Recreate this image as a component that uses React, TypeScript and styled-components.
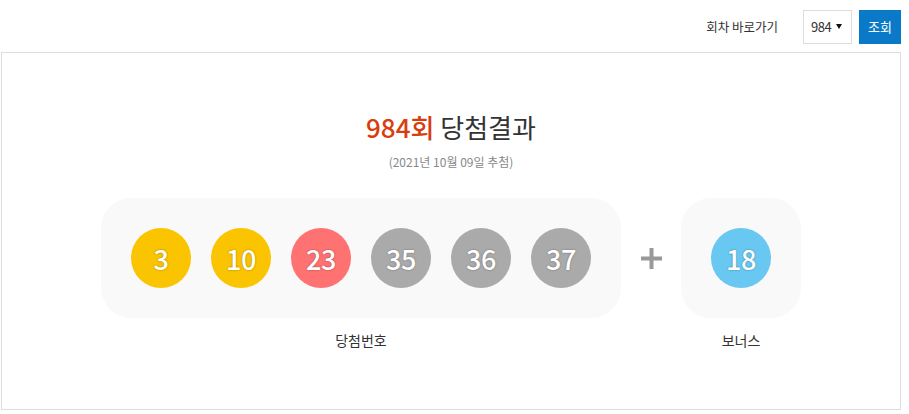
import styled, { createGlobalStyle } from "styled-components";

const GlobalStyle = createGlobalStyle`
  body {
    margin: 0;
    font-family: "Noto Sans CJK KR", "Noto Sans", sans-serif;
    color: #333;
    background: #fff;
  }
`;

type BallColor = "yellow" | "red" | "gray" | "blue";

const ballColors: Record<BallColor, string> = {
  yellow: "#fbc400",
  red: "#ff7272",
  gray: "#aaaaaa",
  blue: "#69c8f2",
};

const colorOf = (n: number): BallColor => {
  if (n <= 10) return "yellow";
  if (n <= 20) return "blue";
  if (n <= 30) return "red";
  return "gray";
};

const App: React.FC = () => {
  return (
    <>
      <GlobalStyle />
      <Wrap>
        <Header>
          <JumpLabel>회차 바로가기</JumpLabel>
          <Select>
            984
            <Caret />
          </Select>
          <SearchButton>조회</SearchButton>
        </Header>
        <Panel>
          <Title>
            <Round>984회</Round> 당첨결과
          </Title>
          <DrawDate>(2021년 10월 09일 추첨)</DrawDate>
          <Result>
            <Group>
              <NumberBox>
                {winning.map((n) => (
                  <Ball key={n} $color={colorOf(n)}>
                    {n}
                  </Ball>
                ))}
              </NumberBox>
              <Label>당첨번호</Label>
            </Group>
            <Plus>
              <svg width="21" height="21" viewBox="0 0 21 21">
                <path d="M10.5 0v21M0 10.5h21" stroke="#999" strokeWidth="4" />
              </svg>
            </Plus>
            <Group>
              <NumberBox>
                <Ball $color={colorOf(bonus)}>{bonus}</Ball>
              </NumberBox>
              <Label>보너스</Label>
            </Group>
          </Result>
        </Panel>
      </Wrap>
    </>
  );
};

const winning = [3, 10, 23, 35, 36, 37];
const bonus = 18;

const Wrap = styled.div`
  width: 900px;
  margin-left: 1px;
`;

const Header = styled.div`
  height: 52px;
  display: flex;
  align-items: center;
  justify-content: flex-end;
  padding-top: 1px;
  box-sizing: border-box;
`;

const JumpLabel = styled.span`
  font-size: 12.5px;
  color: #333;
  margin-right: 25px;
`;

const Select = styled.div`
  width: 49px;
  height: 34px;
  box-sizing: border-box;
  border: 1px solid #ddd;
  display: flex;
  align-items: center;
  padding-left: 7px;
  font-size: 13px;
  color: #333;
  letter-spacing: -0.5px;
`;

const Caret = styled.span`
  width: 0;
  height: 0;
  margin-left: 5px;
  border-left: 3.5px solid transparent;
  border-right: 3.5px solid transparent;
  border-top: 5px solid #111;
`;

const SearchButton = styled.button`
  width: 42px;
  height: 34px;
  margin-left: 7px;
  border: 0;
  padding: 0;
  background: #0a7ac8;
  color: #fff;
  font-family: inherit;
  font-size: 13px;
`;

const Panel = styled.div`
  height: 358px;
  box-sizing: border-box;
  border: 1px solid #ddd;
  padding-top: 59px;
  display: flex;
  flex-direction: column;
  align-items: center;
`;

const Title = styled.h2`
  margin: 0;
  font-size: 26px;
  line-height: 30px;
  font-weight: 400;
  color: #333;
`;

const Round = styled.strong`
  color: #d83d0e;
  font-weight: 500;
`;

const DrawDate = styled.p`
  margin: 11px 0 0;
  font-size: 12px;
  line-height: 18px;
  color: #888;
`;

const Result = styled.div`
  display: flex;
  margin-top: 27px;
`;

const Group = styled.div`
  display: flex;
  flex-direction: column;
  align-items: center;
`;

const NumberBox = styled.div`
  display: flex;
  gap: 20px;
  padding: 30px;
  background: #f9f9f9;
  border-radius: 30px;
`;

const Ball = styled.span<{ $color: BallColor }>`
  width: 60px;
  height: 60px;
  border-radius: 50%;
  background: ${(p) => ballColors[p.$color]};
  color: #fff;
  display: flex;
  align-items: center;
  justify-content: center;
  font-size: 27px;
  font-weight: 500;
  letter-spacing: -0.5px;
  text-shadow: 0 0 2px rgba(0, 0, 0, 0.4);
`;

const Plus = styled.div`
  width: 60px;
  height: 120px;
  display: flex;
  align-items: center;
  justify-content: center;
`;

const Label = styled.div`
  margin-top: 12px;
  font-size: 14px;
  line-height: 20px;
  color: #333;
`;

export default App;
